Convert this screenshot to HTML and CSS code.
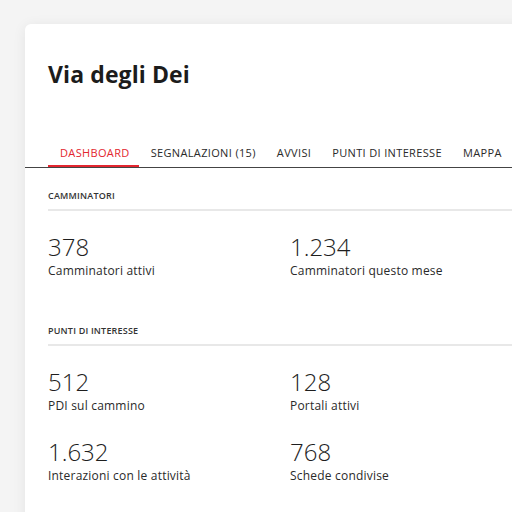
FILE: index.html
```html
<!DOCTYPE html>
<html lang="it">
  <head>
    <meta charset="UTF-8" />
    <meta name="viewport" content="width=device-width, initial-scale=1.0" />
    <title>Via degli Dei</title>
    <link rel="stylesheet" href="styles.css">
  </head>
  <body>
    <div class="card">
      <h1 class="title">Via degli Dei</h1>

      <nav class="tabs">
        <a class="tab active">Dashboard</a>
        <a class="tab">Segnalazioni (15)</a>
        <a class="tab">Avvisi</a>
        <a class="tab">Punti di interesse</a>
        <a class="tab">Mappa</a>
      </nav>

      <section class="section">
        <h2 class="section-head">Camminatori</h2>
        <div class="stats">
          <div class="stat">
            <div class="stat-value">378</div>
            <div class="stat-label">Camminatori attivi</div>
          </div>
          <div class="stat">
            <div class="stat-value">1.234</div>
            <div class="stat-label">Camminatori questo mese</div>
          </div>
        </div>
      </section>

      <section class="section">
        <h2 class="section-head">Punti di interesse</h2>
        <div class="stats">
          <div class="stat">
            <div class="stat-value">512</div>
            <div class="stat-label">PDI sul cammino</div>
          </div>
          <div class="stat">
            <div class="stat-value">128</div>
            <div class="stat-label">Portali attivi</div>
          </div>
          <div class="stat">
            <div class="stat-value">1.632</div>
            <div class="stat-label">Interazioni con le attività</div>
          </div>
          <div class="stat">
            <div class="stat-value">768</div>
            <div class="stat-label">Schede condivise</div>
          </div>
        </div>
      </section>
    </div>
  </body>
</html>
```

FILE: styles.css
```css
body {
  margin: 0;
  padding: 24px 0 0 25px;
  height: 512px;
  box-sizing: border-box;
  overflow: hidden;
  background: #f4f4f4;
  font-family: "Open Sans", "Liberation Sans", sans-serif;
  color: #222;
}
.card {
  width: 540px;
  min-height: 520px;
  background: #fff;
  border-radius: 6px;
  box-shadow: 0 2px 14px rgba(0, 0, 0, 0.07);
  padding-top: 36px;
}
.title {
  margin: 0 0 0 23px;
  font-size: 23px;
  line-height: 28px;
  font-weight: 700;
  letter-spacing: 0.1px;
  color: #1c1c1c;
}
.tabs {
  display: flex;
  margin-top: 52px;
  padding-left: 23px;
  border-bottom: 1px solid #444;
}
.tab {
  padding: 6px 9px 5px 12px;
  font-size: 11px;
  line-height: 14px;
  letter-spacing: 0.35px;
  text-transform: uppercase;
  color: #2a2a2a;
  white-space: nowrap;
  border-bottom: 2px solid transparent;
}
.tab.active {
  color: #e3262f;
  border-bottom-color: #e3262f;
}
.section {
  padding: 0 0 0 23px;
  margin-top: 22px;
}
.section + .section {
  margin-top: 46px;
}
.section-head {
  margin: 0;
  padding-bottom: 7px;
  border-bottom: 2px solid #e8e8e8;
  font-size: 9px;
  line-height: 12px;
  font-weight: 600;
  letter-spacing: 0.2px;
  text-transform: uppercase;
  color: #333;
}
.stats {
  display: grid;
  grid-template-columns: 242px 242px;
  row-gap: 23px;
  padding-top: 21px;
}
.stat-value {
  font-size: 24px;
  line-height: 30px;
  font-weight: 300;
  color: #1e1e1e;
}
.stat-label {
  margin-top: 1px;
  font-size: 12px;
  line-height: 16px;
  letter-spacing: 0.2px;
  color: #2a2a2a;
}
```
